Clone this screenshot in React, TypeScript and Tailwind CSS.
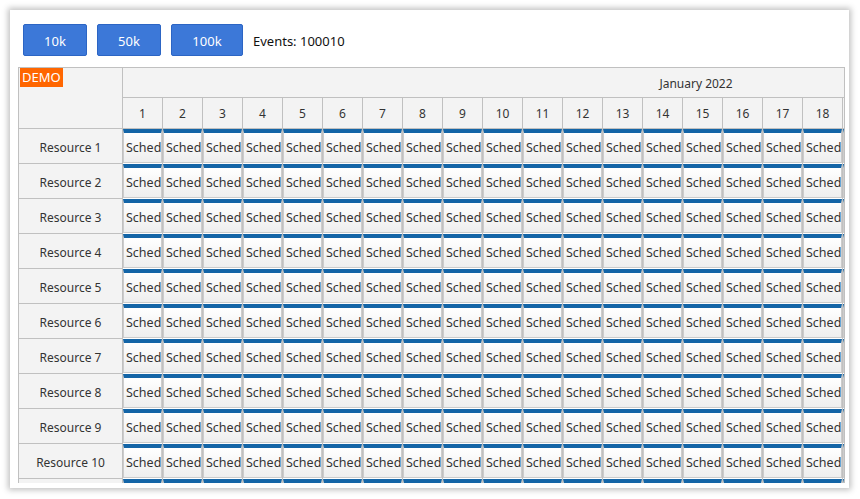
import React from "react";

const days = Array.from({ length: 19 }, (_, i) => i + 1);
const rows = Array.from({ length: 11 }, (_, i) => i + 1);

export default function App() {
  return (
    <div className="w-[860px] h-[499px] bg-white overflow-hidden" style={{ fontFamily: '"Segoe UI", "Noto Sans", "Open Sans", sans-serif' }}>
      <div className="ml-[10px] mt-[10px] w-[839px] h-[478px] bg-white shadow-[0_0_6px_2px_rgba(0,0,0,0.25)] flex flex-col overflow-hidden">
        <div className="flex items-center gap-[10px] pl-[13px] mt-[14px] h-[32px] shrink-0">
          {["10k", "50k", "100k"].map((t) => (
            <button
              key={t}
              className={`h-[32px] ${t === "100k" ? "w-[72px]" : "w-[64px]"} pt-[3px] bg-[#3c78d8] border border-[#2c65c4] rounded-[2px] text-white text-[13px]`}
            >
              {t}
            </button>
          ))}
          <span className="text-[13px] text-[#111] pt-[3px]">Events: 100010</span>
        </div>
        <div className="ml-[8px] mt-[11px] w-[827px] h-[416px] shrink-0 border-t border-l border-r border-[#c0c0c0] overflow-hidden flex flex-col text-[#333]">
          {/* header */}
          <div className="flex shrink-0">
            <div className="w-[104px] h-[61px] shrink-0 bg-[#f3f3f3] border-r border-b border-[#c0c0c0] relative">
              <span className="absolute left-[1px] top-0 bg-[#ff6600] text-white text-[13px] leading-[19px] px-[2px]">DEMO</span>
            </div>
            <div className="flex flex-col">
              <div className="h-[30px] w-[1146px] bg-[#f3f3f3] border-b border-[#c0c0c0] flex items-center justify-center text-[12px] pt-[2px]">
                January 2022
              </div>
              <div className="flex h-[31px]">
                {days.map((d) => (
                  <div key={d} className="w-[40px] shrink-0 bg-[#f3f3f3] border-r border-b border-[#c0c0c0] flex items-center justify-center text-[12px] pt-[2px]">
                    {d < 19 ? d : ""}
                  </div>
                ))}
              </div>
            </div>
          </div>
          {/* rows */}
          {rows.map((r) => (
            <div key={r} className="flex shrink-0 h-[35px]">
              <div className="w-[104px] shrink-0 bg-[#f3f3f3] border-r border-b border-[#c0c0c0] flex items-center justify-center text-[12px] pt-[3px]">
                {r < 11 ? `Resource ${r}` : ""}
              </div>
              <div className="flex">
                {days.map((d) => (
                  <div key={d} className="w-[40px] shrink-0 h-[35px] border-r border-[#c0c0c0] bg-white">
                    <div className="h-[34px] border-t-[4px] border-t-[#1465a7] border-x border-x-[#cccccc] border-b border-b-[#cccccc] bg-gradient-to-b from-white to-[#eeeeee] overflow-hidden whitespace-nowrap pl-[2px] text-[12.5px] leading-[29px] text-[#333]">
                      {d < 19 && r < 11 ? "Sched" : ""}
                    </div>
                  </div>
                ))}
              </div>
            </div>
          ))}
        </div>
      </div>
    </div>
  );
}
